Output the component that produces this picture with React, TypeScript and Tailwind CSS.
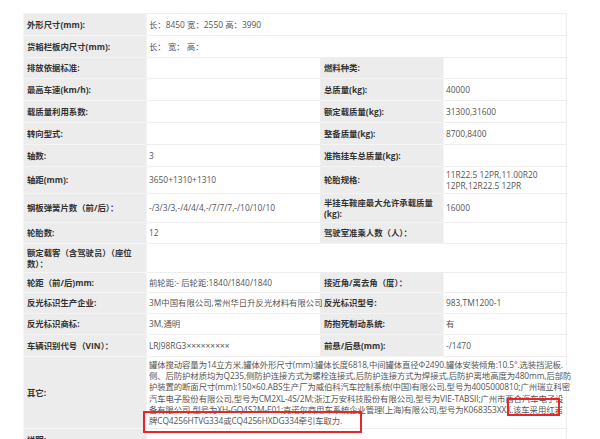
const label = 'bg-[#ececec] border border-[#f4f4f4] px-[3px] font-bold text-[#333] align-middle';
const value = 'bg-white border border-[#eeeeee] px-[2px] text-[#555] align-middle';

type Cell = { text?: string; colSpan?: number; nowrap?: boolean };
type Row = { h: number; cells: [string, Cell, string?, Cell?] };

const rows: Row[] = [
  { h: 22, cells: ['外形尺寸(mm):', { text: '长：8450 宽：2550 高：3990', colSpan: 3 }] },
  { h: 22, cells: ['货箱栏板内尺寸(mm):', { text: '长： 宽： 高：', colSpan: 3 }] },
  { h: 21, cells: ['排放依据标准:', {}, '燃料种类:', {}] },
  { h: 22, cells: ['最高车速(km/h):', {}, '总质量(kg):', { text: '40000' }] },
  { h: 22, cells: ['载质量利用系数:', {}, '额定载质量(kg):', { text: '31300,31600' }] },
  { h: 22, cells: ['转向型式:', {}, '整备质量(kg):', { text: '8700,8400' }] },
  { h: 22, cells: ['轴数:', { text: '3' }, '准拖挂车总质量(kg):', {}] },
  { h: 27, cells: ['轴距(mm):', { text: '3650+1310+1310' }, '轮胎规格:', { text: '11R22.5 12PR,11.00R20 12PR,12R22.5 12PR' }] },
  { h: 29, cells: ['钢板弹簧片数（前/后）：', { text: '-/3/3/3,-/4/4/4,-/7/7/7,-/10/10/10' }, '半挂车鞍座最大允许承载质量(kg):', { text: '16000' }] },
  { h: 21, cells: ['轮胎数:', { text: '12' }, '驾驶室准乘人数（人）：', {}] },
  { h: 29, cells: ['额定载客（含驾驶员）（座位数）：', { colSpan: 3 }] },
  { h: 20, cells: ['轮距（前/后)mm:', { text: '前轮距:- 后轮距:1840/1840/1840' }, '接近角/离去角（度）：', {}] },
  { h: 21, cells: ['反光标识生产企业:', { text: '3M中国有限公司,常州华日升反光材料有限公司', nowrap: true }, '反光标识型号:', { text: '983,TM1200-1' }] },
  { h: 21, cells: ['反光标识商标:', { text: '3M,通明' }, '防抱死制动系统:', { text: '有' }] },
  { h: 22, cells: ['车辆识别代号（VIN）：', { text: 'LRJ98RG3×××××××××' }, '前悬/后悬(mm):', { text: '-/1470' }] },
];

const otherLines = [
  '罐体搅动容量为14立方米,罐体外形尺寸(mm):罐体长度6818,中间罐体直径Φ2490.罐体安装倾角:10.5°.选装挡泥板.',
  '侧、后防护材质均为Q235,侧防护连接方式为螺栓连接式,后防护连接方式为焊接式,后防护离地高度为480mm,后部防',
  '护装置的断面尺寸(mm):150×60.ABS生产厂为威伯科汽车控制系统(中国)有限公司,型号为4005000810;广州瑞立科密',
  '汽车电子股份有限公司,型号为CM2XL-4S/2M;浙江万安科技股份有限公司,型号为VIE-TABSII;广州市西合汽车电子设',
  '备有限公司,型号为XH-GQ4S2M-E01;克诺尔商用车系统企业管理(上海)有限公司,型号为K068353XXX.该车采用红岩',
  '牌CQ4256HTVG334或CQ4256HXDG334牵引车取力.',
];

function ValueCell({ cell }: { cell?: Cell }) {
  return (
    <td colSpan={cell?.colSpan} className={`${value} ${cell?.nowrap ? 'whitespace-nowrap' : ''}`}>
      {cell?.text}
    </td>
  );
}

export default function App() {
  return (
    <div className="h-[439px] w-[600px] overflow-hidden bg-white pt-[13px] pl-[23px] font-['Open_Sans','Noto_Sans_CJK_SC',sans-serif] text-[8.4px] leading-[11.2px]">
      <div className="relative w-[543px]">
        <table className="w-[543px] table-fixed border-collapse">
          <colgroup>
            <col className="w-[123px]" />
            <col className="w-[174px]" />
            <col className="w-[123px]" />
            <col className="w-[123px]" />
          </colgroup>
          <tbody>
            {rows.map((row, i) => (
              <tr key={i} style={{ height: row.h }}>
                <td className={label}>{row.cells[0]}</td>
                <ValueCell cell={row.cells[1]} />
                {row.cells[2] !== undefined && <td className={label}>{row.cells[2]}</td>}
                {row.cells[2] !== undefined && <ValueCell cell={row.cells[3]} />}
              </tr>
            ))}
            <tr className="h-[70px]">
              <td className={label}>其它:</td>
              <td colSpan={3} className={`${value} py-[2px]`}>
                {otherLines.map((line, i) => (
                  <div key={i} className="whitespace-nowrap tracking-[-0.1px]">
                    {line}
                  </div>
                ))}
              </td>
            </tr>
            <tr className="h-[22px]">
              <td className={label}>说明:</td>
              <td colSpan={3} className={value}></td>
            </tr>
          </tbody>
        </table>

        {/* red annotation boxes */}
        <div className="absolute left-[120px] top-[398px] h-[22px] w-[219px] border-2 border-[#e8262a]" />
        <div className="absolute left-[484px] top-[385px] h-[18px] w-[53px] border-2 border-[#e8262a]" />
      </div>
    </div>
  );
}
